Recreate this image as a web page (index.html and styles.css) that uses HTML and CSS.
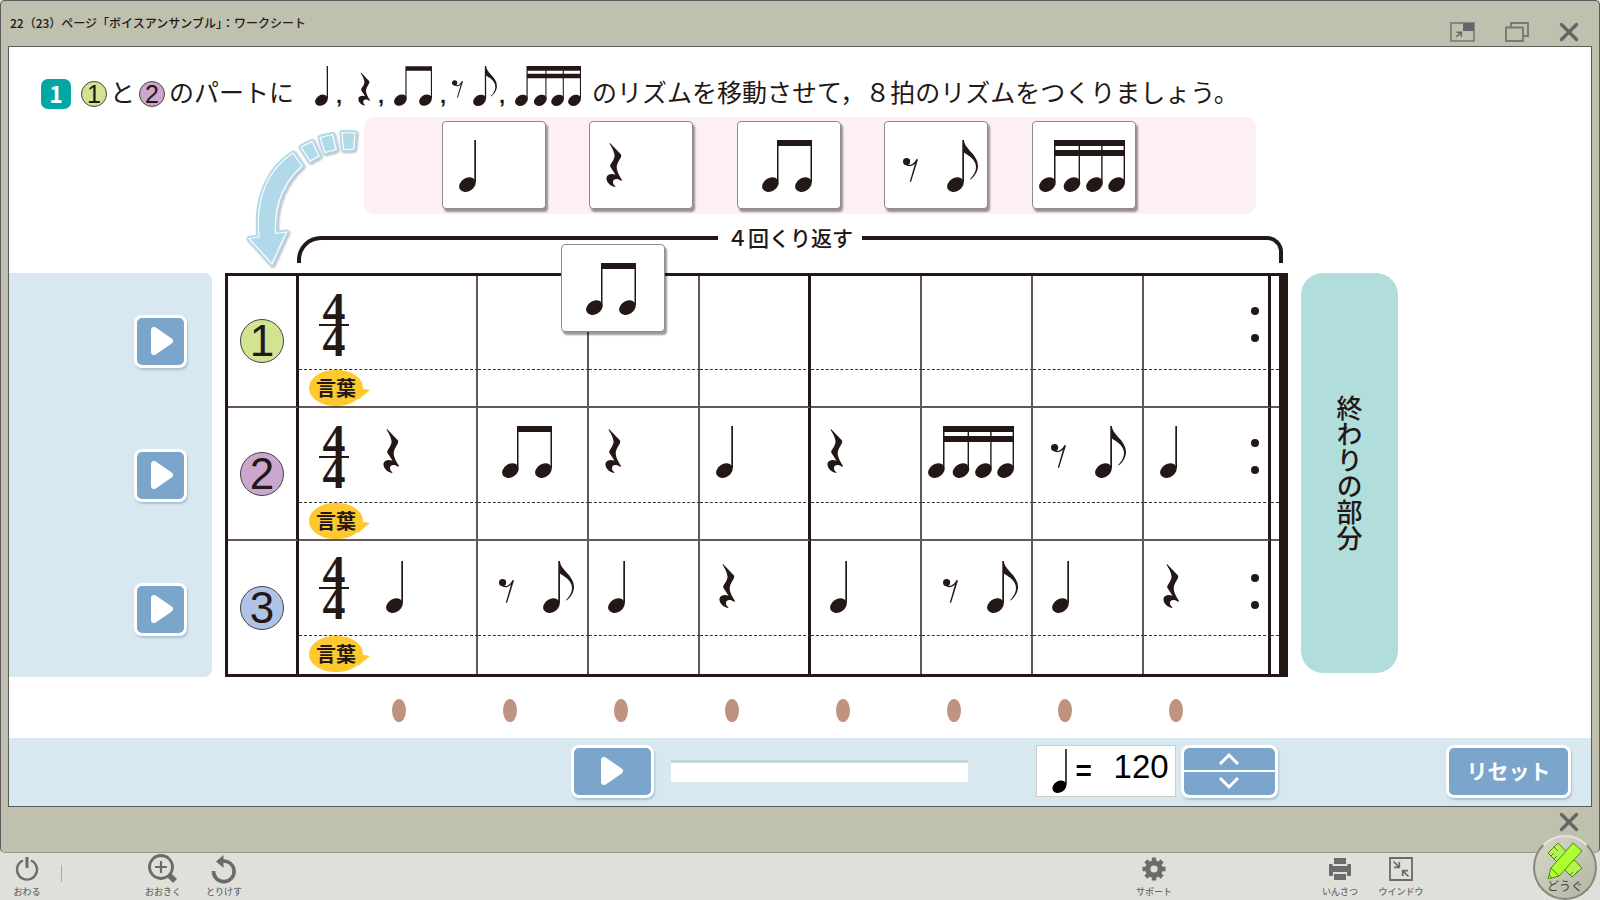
FILE: index.html
```html
<!DOCTYPE html>
<html lang="ja">
<head>
  <meta charset="UTF-8" />
  <meta name="viewport" content="width=device-width, initial-scale=1.0"/>
  <title>ボイスアンサンブル：ワークシート</title>
  <link rel="stylesheet" href="styles.css">
</head>
<body>
  <!-- note shapes -->
  <svg class="defs" aria-hidden="true">
    <symbol id="quarter" viewBox="0 0 17 52">
      <ellipse cx="8.4" cy="44.6" rx="8.8" ry="6.7" transform="rotate(-32 8.4 44.6)"/>
      <path d="M15.3 0H17V42H15.3Z"/>
    </symbol>
    <symbol id="rest" viewBox="0 0 16 44">
      <path d="M4 0L15 11.5C16.5 14.5 10.5 19 10.7 25C11 29 13.5 33 16 37L15.3 38C11 34.8 7 36 7 39C7 41 8 42.5 9.5 43.3L9 44C4 43 0 39 .5 34.5C1 31 6 30 9.5 31.7L4.2 23.5C3.4 21 9 17 8.5 12C8 8 5.5 4 3.6.8Z"/>
    </symbol>
    <symbol id="pair" viewBox="0 0 50 52">
      <ellipse cx="8.4" cy="44.6" rx="8.8" ry="6.7" transform="rotate(-32 8.4 44.6)"/>
      <ellipse cx="41.4" cy="44.6" rx="8.8" ry="6.7" transform="rotate(-32 41.4 44.6)"/>
      <path d="M15 0H50V42H48.5V6H16.5V42H15Z"/>
    </symbol>
    <symbol id="eighth-rest" viewBox="0 0 15 24">
      <circle cx="3.6" cy="3.6" r="3.6"/>
      <path d="M3 6C7 8.5 11 6 13.5 1L15 1.5L8 24L6.8 23.5L12 5.5C9 8.6 6 9 3 7Z"/>
    </symbol>
    <symbol id="eighth" viewBox="0 0 31 52">
      <ellipse cx="8.4" cy="44.6" rx="8.8" ry="6.7" transform="rotate(-32 8.4 44.6)"/>
      <path d="M15.3 0H17C17 9 31 14 31 26C31 32 27 37 23.5 39.5L23 39C28 34 30 29 28.5 24C26 17 20 15 17 12.5V42H15.3Z"/>
    </symbol>
    <symbol id="sixteenths" viewBox="0 0 86 52">
      <ellipse cx="8.4" cy="44.6" rx="8.8" ry="6.7" transform="rotate(-32 8.4 44.6)"/>
      <ellipse cx="33" cy="44.6" rx="8.8" ry="6.7" transform="rotate(-32 33 44.6)"/>
      <ellipse cx="55.5" cy="44.6" rx="8.8" ry="6.7" transform="rotate(-32 55.5 44.6)"/>
      <ellipse cx="77.6" cy="44.6" rx="8.8" ry="6.7" transform="rotate(-32 77.6 44.6)"/>
      <path d="M15 0H86V42H84.6V16H63.6V42H62.2V16H41V42H39.6V16H16.5V42H15ZM16.5 6V10H39.6V6ZM41 6V10H62.2V6ZM63.6 6V10H84.6V6Z" fill-rule="evenodd"/>
    </symbol>
    <symbol id="play" viewBox="0 0 22 28">
      <path d="M3 3V25L19 14Z" fill="#fff" stroke="#fff" stroke-width="6" stroke-linejoin="round"/>
    </symbol>
    <symbol id="cross" viewBox="0 0 20 20">
      <path d="M2.5 2.5L17.5 17.5M17.5 2.5L2.5 17.5" fill="none" stroke="#666" stroke-width="3.4" stroke-linecap="round"/>
    </symbol>
  </svg>

  <div class="window">
    <header class="titlebar">
      <span class="title">22（23）ページ「ボイスアンサンブル」：ワークシート</span>
      <div class="window-buttons">
        <button type="button" aria-label="小さく表示">
          <svg width="25" height="20" viewBox="0 0 25 20"><rect x="1" y="1" width="23" height="18" fill="none" stroke="#777" stroke-width="1.6"/><path d="M13 1H24V9H13Z" fill="#666"/><path d="M6 15L11 10.5M6.5 10.3H11.3V14.8" fill="none" stroke="#666" stroke-width="1.6"/></svg>
        </button>
        <button type="button" aria-label="元のサイズ">
          <svg width="24" height="20" viewBox="0 0 24 20"><path d="M1 5.5H18V19H1ZM6 5V1H23V14H18.5" fill="none" stroke="#777" stroke-width="1.8"/></svg>
        </button>
        <button type="button" aria-label="閉じる">
          <svg width="20" height="20"><use href="#cross"/></svg>
        </button>
      </div>
    </header>

    <main class="sheet">
      <h1 class="question">
        <span class="badge">1</span>
        <span class="circle green">1</span>
        <span>と</span>
        <span class="circle purple">2</span>
        <span>のパートに</span>
        <span class="question-notes">
          <svg class="note quarter"><use href="#quarter"/></svg><span class="comma">,</span>
          <svg class="note rest"><use href="#rest"/></svg><span class="comma">,</span>
          <svg class="note pair"><use href="#pair"/></svg><span class="comma">,</span>
          <svg class="note eighth-rest"><use href="#eighth-rest"/></svg>
          <svg class="note eighth"><use href="#eighth"/></svg><span class="comma">,</span>
          <svg class="note sixteenths"><use href="#sixteenths"/></svg>
        </span>
        <span>のリズムを移動させて，８拍のリズムをつくりましょう。</span>
      </h1>

      <div class="stage">
        <div class="tray-row">
          <svg class="arrow" viewBox="244 126 118 146" aria-hidden="true">
            <defs>
              <path id="arrow-shape" d="M293 153C268 169 255 198 259 237L249 238.5L272 264L286.5 232L275.5 233.5C274 205 284 182 302 166ZM301 147L312 141.5L319 156L310 161ZM320 137.5L332.5 134.5L336 149.5L325 152.5ZM342 132.5L355 133L353.5 149L343.5 149.5Z" stroke-linejoin="round" fill="#b1d9ea"/>
            </defs>
            <use href="#arrow-shape" stroke="#b1d9ea" stroke-width="5"/>
            <use href="#arrow-shape" stroke="#fff" stroke-width="1.2"/>
          </svg>
          <div class="tray">
            <button type="button" class="card" aria-label="四分音符"><svg class="note quarter"><use href="#quarter"/></svg></button>
            <button type="button" class="card" aria-label="四分休符"><svg class="note rest"><use href="#rest"/></svg></button>
            <button type="button" class="card" aria-label="八分音符二つ"><svg class="note pair"><use href="#pair"/></svg></button>
            <button type="button" class="card" aria-label="八分休符と八分音符"><svg class="note eighth-rest"><use href="#eighth-rest"/></svg><svg class="note eighth"><use href="#eighth"/></svg></button>
            <button type="button" class="card" aria-label="十六分音符四つ"><svg class="note sixteenths"><use href="#sixteenths"/></svg></button>
          </div>
        </div>

        <div class="repeat-bracket">
          <span class="arm arm-left"></span>
          <span class="repeat-text">４回くり返す</span>
          <span class="arm arm-right"></span>
        </div>

        <div class="part-buttons">
          <button type="button" class="blue-button part-play" aria-label="パート1を再生"><svg width="22" height="28"><use href="#play"/></svg></button>
          <button type="button" class="blue-button part-play" aria-label="パート2を再生"><svg width="22" height="28"><use href="#play"/></svg></button>
          <button type="button" class="blue-button part-play" aria-label="パート3を再生"><svg width="22" height="28"><use href="#play"/></svg></button>
        </div>

        <div class="score">
          <table>
            <colgroup>
              <col class="col-number"><col class="col-first"><col class="col-beat"><col class="col-beat"><col class="col-beat"><col class="col-beat"><col class="col-beat"><col class="col-beat"><col class="col-last"><col class="col-end">
            </colgroup>
            <tbody class="part-1">
              <tr class="rhythm">
                <th rowspan="2"><span class="circle big green">1</span></th>
                <td><div class="beat"><span class="time-sig">4<br>4</span></div></td>
                <td></td><td></td><td></td><td></td><td></td><td></td>
                <td><div class="beat"><span class="repeat-dots"><i></i><i></i></span></div></td>
                <td></td>
              </tr>
              <tr class="words">
                <td><span class="word-label">言葉</span></td>
                <td></td><td></td><td></td><td></td><td></td><td></td><td></td><td></td>
              </tr>
            </tbody>
            <tbody class="part-2">
              <tr class="rhythm">
                <th rowspan="2"><span class="circle big purple">2</span></th>
                <td><div class="beat"><span class="time-sig">4<br>4</span><svg class="note rest"><use href="#rest"/></svg></div></td>
                <td><div class="beat"><svg class="note pair"><use href="#pair"/></svg></div></td>
                <td><div class="beat"><svg class="note rest"><use href="#rest"/></svg></div></td>
                <td><div class="beat"><svg class="note quarter"><use href="#quarter"/></svg></div></td>
                <td><div class="beat"><svg class="note rest"><use href="#rest"/></svg></div></td>
                <td><div class="beat"><svg class="note sixteenths"><use href="#sixteenths"/></svg></div></td>
                <td><div class="beat"><svg class="note eighth-rest"><use href="#eighth-rest"/></svg><svg class="note eighth"><use href="#eighth"/></svg></div></td>
                <td><div class="beat"><svg class="note quarter"><use href="#quarter"/></svg><span class="repeat-dots"><i></i><i></i></span></div></td>
                <td></td>
              </tr>
              <tr class="words">
                <td><span class="word-label">言葉</span></td>
                <td></td><td></td><td></td><td></td><td></td><td></td><td></td><td></td>
              </tr>
            </tbody>
            <tbody class="part-3">
              <tr class="rhythm">
                <th rowspan="2"><span class="circle big blue">3</span></th>
                <td><div class="beat"><span class="time-sig">4<br>4</span><svg class="note quarter"><use href="#quarter"/></svg></div></td>
                <td><div class="beat"><svg class="note eighth-rest"><use href="#eighth-rest"/></svg><svg class="note eighth"><use href="#eighth"/></svg></div></td>
                <td><div class="beat"><svg class="note quarter"><use href="#quarter"/></svg></div></td>
                <td><div class="beat"><svg class="note rest"><use href="#rest"/></svg></div></td>
                <td><div class="beat"><svg class="note quarter"><use href="#quarter"/></svg></div></td>
                <td><div class="beat"><svg class="note eighth-rest"><use href="#eighth-rest"/></svg><svg class="note eighth"><use href="#eighth"/></svg></div></td>
                <td><div class="beat"><svg class="note quarter"><use href="#quarter"/></svg></div></td>
                <td><div class="beat"><svg class="note rest"><use href="#rest"/></svg><span class="repeat-dots"><i></i><i></i></span></div></td>
                <td></td>
              </tr>
              <tr class="words">
                <td><span class="word-label">言葉</span></td>
                <td></td><td></td><td></td><td></td><td></td><td></td><td></td><td></td>
              </tr>
            </tbody>
          </table>
          <button type="button" class="card dragging" aria-label="移動中の八分音符"><svg class="note pair"><use href="#pair"/></svg></button>
        </div>

        <button type="button" class="ending">終わりの部分</button>

        <div class="beat-marks">
          <i></i><i></i><i></i><i></i><i></i><i></i><i></i><i></i>
        </div>
      </div>

      <div class="controls">
        <button type="button" class="blue-button main-play" aria-label="再生"><svg width="22" height="28"><use href="#play"/></svg></button>
        <progress value="0" max="100" aria-label="再生位置"></progress>
        <label class="tempo">
          <svg class="tempo-note"><use href="#quarter"/></svg>
          <span class="equals">=</span>
          <input type="text" value="120" aria-label="テンポ">
        </label>
        <div class="stepper">
          <button type="button" aria-label="速く"><svg width="22" height="14" viewBox="0 0 22 14"><path d="M2 12L11 3L20 12"/></svg></button>
          <button type="button" aria-label="遅く"><svg width="22" height="14" viewBox="0 0 22 14"><path d="M2 2L11 11L20 2"/></svg></button>
        </div>
        <button type="reset" class="blue-button reset">リセット</button>
      </div>
    </main>

    <div class="window-foot">
      <button type="button" aria-label="閉じる"><svg width="20" height="20"><use href="#cross"/></svg></button>
    </div>
  </div>

  <nav class="toolbar">
    <button type="button" class="tool">
      <svg width="24" height="26" viewBox="0 0 24 26"><path d="M8 4.5A10 10 0 1 0 16 4.5" fill="none" stroke="#6b6b6b" stroke-width="2.4"/><path d="M12 1V12" stroke="#6b6b6b" stroke-width="3"/></svg>
      <span>おわる</span>
    </button>
    <span class="divider"></span>
    <button type="button" class="tool zoom-tool">
      <svg width="30" height="30" viewBox="0 0 30 30"><circle cx="13" cy="13" r="11.5" fill="none" stroke="#6b6b6b" stroke-width="2.8"/><path d="M13 7V19M7 13H19" stroke="#6b6b6b" stroke-width="2.2"/><path d="M21 21L27 27" stroke="#6b6b6b" stroke-width="5.5"/></svg>
      <span>おおきく</span>
    </button>
    <button type="button" class="tool">
      <svg width="26" height="30" viewBox="0 0 26 30"><path d="M2.5 17A10.3 10.3 0 1 0 10.5 7.3" fill="none" stroke="#6b6b6b" stroke-width="3.6"/><path d="M5 7.5L12.5 1V14Z" fill="#6b6b6b"/></svg>
      <span>とりけす</span>
    </button>
    <button type="button" class="tool support-tool">
      <svg width="24" height="24" viewBox="0 0 24 24"><circle cx="12" cy="12" r="6.2" fill="none" stroke="#6b6b6b" stroke-width="5.2"/><path d="M12 .5V5M12 19V23.5M.5 12H5M19 12H23.5M3.9 3.9L7 7M17 17L20.1 20.1M20.1 3.9L17 7M7 17L3.9 20.1" stroke="#6b6b6b" stroke-width="4.4"/></svg>
      <span>サポート</span>
    </button>
    <button type="button" class="tool print-tool">
      <svg width="24" height="24" viewBox="0 0 24 24" fill="#6b6b6b"><path d="M6 1H18V7H6Z"/><path d="M1 7H4.5V9H19.5V7H23V19H19V15H5V19H1Z"/><path d="M6 17H18V23H6Z"/></svg>
      <span>いんさつ</span>
    </button>
    <button type="button" class="tool">
      <svg width="24" height="24" viewBox="0 0 24 24" fill="none" stroke="#6b6b6b" stroke-width="1.8"><path d="M1 1H23V23H1Z"/><path d="M4.5 4.5L10 10M10.3 5V10.3H5M19.5 19.5L14 14M13.7 19V13.7H19" stroke-width="1.7"/></svg>
      <span>ウインドウ</span>
    </button>
    <button type="button" class="pen-tool">
      <svg width="36" height="38" viewBox="0 0 36 38" stroke="#4c8a1c" stroke-width="1" stroke-linejoin="round"><path d="M1 12L11 2L35 27L25 36Z" fill="#b5f34e"/><path d="M4 15L7 12M7 18L10 15M7 6L11 10M23 34L26 31M28 33L31 30M27 19L24 22" fill="none"/><path d="M26 2L35 10L12 35L1 38L4 27Z" fill="#adff2f"/><path d="M4 27L12 35M2 34L5 37" fill="none"/></svg>
      <span>どうぐ</span>
    </button>
  </nav>
</body>
</html>
```
FILE: styles.css
```css
* {
  box-sizing: border-box;
}

body {
  margin: 0;
  min-height: 100vh;
  display: flex;
  flex-direction: column;
  background: #dfe0da;
  color: #231815;
  font-family: "Noto Sans CJK JP", "Liberation Sans", sans-serif;
}

button {
  margin: 0;
  padding: 0;
  border: none;
  background: none;
  color: inherit;
  font-family: inherit;
  cursor: pointer;
}

svg {
  display: block;
  flex: none;
}

.defs {
  position: absolute;
  width: 0;
  height: 0;
}

/* window frame */
.window {
  flex: 1;
  display: flex;
  flex-direction: column;
  padding: 0 7px;
  background: #c0c0ae;
  border: 1px solid #5c5c5c;
  border-bottom-color: #97978a;
  border-radius: 5px;
}

.titlebar {
  display: flex;
  justify-content: space-between;
  height: 45px;
  padding: 0 13px 0 2px;
}

.title {
  font-size: 12px;
  font-weight: 500;
  line-height: 44px;
}

.window-buttons {
  display: flex;
  align-items: flex-end;
  gap: 30px;
  padding-bottom: 4px;
}

.sheet {
  flex: 1;
  display: flex;
  flex-direction: column;
  background: #fff;
  border: 1px solid #5c5c5c;
}

.window-foot {
  display: flex;
  justify-content: flex-end;
  height: 45px;
  padding: 5px 13px 0 0;
  align-items: flex-start;
}

/* question line */
.question {
  display: flex;
  align-items: flex-end;
  height: 70px;
  margin: 0;
  padding: 0 0 7px 32px;
  font-size: 25px;
  font-weight: 400;
  line-height: 37px;
  white-space: nowrap;
}

.badge {
  width: 30px;
  height: 30px;
  margin: 0 10px 1px 0;
  border-radius: 7px;
  background: #00a7a5;
  color: #fff;
  font-size: 23px;
  font-weight: 700;
  line-height: 29px;
  text-align: center;
}

.circle {
  display: block;
  width: 26px;
  height: 26px;
  margin: 0 4px 3px 0;
  border: 1px solid #444;
  border-radius: 50%;
  font-family: "Liberation Sans", sans-serif;
  font-size: 25px;
  font-weight: 400;
  line-height: 24px;
  text-align: center;
}

.question .green {
  margin-right: 3px;
}

.question .purple {
  margin-left: 4px;
}

.green { background: #d2e392; }
.purple { background: #cba6cd; }
.blue { background: #afc3e6; }

.question-notes {
  display: flex;
  align-items: flex-end;
  gap: 8px;
  height: 40px;
  margin: 0 11px 4px 21px;
}

.comma {
  width: 8px;
  font-family: "Liberation Sans", sans-serif;
  font-weight: 700;
  font-size: 22px;
  line-height: 20px;
}

.question-notes .quarter { width: 13px; height: 40px; }
.question-notes .rest { width: 12px; height: 34px; margin-left: 6px; }
.question-notes .pair { width: 38px; height: 40px; }
.question-notes .eighth-rest { width: 11px; height: 18px; margin: 0 2px 8px -4px; }
.question-notes .eighth { width: 24px; height: 40px; margin-right: -6px; }
.question-notes .sixteenths { width: 66px; height: 40px; }

/* notes */
.note {
  fill: #231815;
  overflow: visible;
}

.card .quarter, .beat .quarter { width: 17px; height: 52px; margin-left: 16px; }
.card .rest, .beat .rest { width: 16px; height: 44px; margin: 3px 0 0 16px; }
.card .pair, .beat .pair { width: 50px; height: 52px; margin-left: 24px; }
.card .eighth-rest, .beat .eighth-rest { width: 15px; height: 24px; margin: 18px 0 0 18px; }
.card .eighth, .beat .eighth { width: 31px; height: 52px; margin-left: 29px; }
.card .sixteenths, .beat .sixteenths { width: 86px; height: 52px; margin-left: 6px; }

.stage {
  flex: 1;
  display: grid;
  grid-template-columns: 204fr 1063fr 97fr 181fr;
  grid-template-rows: auto auto auto 1fr;
  column-gap: 13px;
}

.tray-row {
  grid-column: 2;
  position: relative;
  padding: 0 32px 0 139px;
}

.arrow {
  position: absolute;
  left: 19px;
  top: 9px;
  width: 118px;
  height: 146px;
  filter: drop-shadow(1px 1px 1px rgba(0, 0, 0, 0.3));
}

.tray {
  display: flex;
  justify-content: space-between;
  padding: 4px 120px 5px 78px;
  border-radius: 10px;
  background: #fdeff4;
}

.card {
  display: flex;
  align-items: flex-start;
  width: 104px;
  height: 88px;
  padding-top: 18px;
  background: #fff;
  border: 1px solid #8c8c8c;
  border-radius: 4px;
  box-shadow: 2px 3px 2px rgba(0, 0, 0, 0.4);
}

.repeat-bracket {
  grid-column: 2;
  display: flex;
  align-items: flex-start;
  margin: 12px 5px 10px 72px;
}

.arm {
  flex: 1;
  height: 27px;
  margin-top: 10px;
  border-top: 4px solid #231815;
}

.arm-left {
  border-left: 4px solid #231815;
  border-top-left-radius: 24px;
}

.arm-right {
  border-right: 4px solid #231815;
  border-top-right-radius: 16px;
}

.repeat-text {
  padding: 0 9px;
  font-size: 21px;
  font-weight: 500;
  line-height: 22px;
}

/* play buttons at the left */
.part-buttons {
  grid-column: 1;
  grid-row: 3;
  display: grid;
  align-items: center;
  justify-items: end;
  padding: 1px 25px 1px 0;
  background: #d8e8f0;
  border-radius: 0 8px 8px 0;
}

.blue-button {
  display: flex;
  align-items: center;
  justify-content: center;
  background: #7ba5ca;
  border: 3px solid #fff;
  border-radius: 8px;
  box-shadow: 1px 2px 2px rgba(60, 110, 130, 0.3);
  color: #fff;
}

.part-play {
  width: 53px;
  height: 53px;
  padding-left: 4px;
}

/* score */
.score {
  grid-column: 2;
  grid-row: 3;
  position: relative;
}

table {
  width: 100%;
  table-layout: fixed;
  border-collapse: separate;
  border-spacing: 0;
  border: 3px solid #231815;
  border-right-width: 9px;
}

.col-number { width: 71px; }
.col-first { width: 179px; }
.col-beat { width: 111px; }
.col-last { width: 127px; }
.col-end { width: 8px; }

th,
td {
  padding: 0;
  vertical-align: top;
  border-right: 2px solid #625956;
}

th {
  vertical-align: middle;
  border-right: 3px solid #231815;
}

.rhythm td {
  height: 95px;
  border-bottom: 1px dashed #333;
}

.words td {
  height: 38px;
}

.part-1 .rhythm td {
  height: 94px;
}

.part-1 .words td {
  height: 37px;
}

tbody:not(.part-3) th,
tbody:not(.part-3) .words td {
  border-bottom: 2px solid #625956;
}

/* thick bar lines */
.rhythm td:nth-child(5),
.words td:nth-child(4),
.rhythm td:nth-child(9),
.words td:nth-child(8) {
  border-right: 3px solid #231815;
}

.rhythm td:last-child,
.words td:last-child {
  border-right: none;
}

.beat {
  display: flex;
  align-items: flex-start;
  padding-top: 18px;
}

.part-3 .beat {
  padding: 20px 0 0 3px;
}

.time-sig {
  position: relative;
  width: 30px;
  height: 62px;
  margin: 0 18px 0 20px;
  font-family: "Liberation Serif", serif;
  font-size: 46px;
  font-weight: 700;
  line-height: 31px;
  text-align: center;
}

.time-sig::after {
  content: "";
  position: absolute;
  left: 0;
  right: 0;
  top: 30px;
  height: 2px;
  background: #231815;
}

.part-3 .time-sig {
  margin: -4px 21px 0 17px;
}

.repeat-dots {
  display: flex;
  flex-direction: column;
  gap: 19px;
  margin: 13px 9px 0 auto;
}

.repeat-dots i {
  width: 8px;
  height: 8px;
  border-radius: 50%;
  background: #231815;
}

.big {
  width: 44px;
  height: 44px;
  margin: 0 auto;
  font-size: 44px;
  line-height: 42px;
}

.word-label {
  position: relative;
  display: block;
  width: 54px;
  height: 36px;
  margin-left: 10px;
  border-radius: 50% / 52%;
  background: #fdc92f;
  font-size: 20px;
  font-weight: 700;
  line-height: 35px;
  text-align: center;
}

.word-label::after {
  content: "";
  position: absolute;
  left: 49px;
  top: 18px;
  border-top: 2px solid transparent;
  border-left: 12px solid #fdc92f;
  border-bottom: 10px solid transparent;
}

.dragging {
  position: absolute;
  left: 31.6%;
  top: -29px;
}

.ending {
  grid-column: 3;
  grid-row: 3;
  margin-bottom: 4px;
  border-radius: 22px;
  background: #b1dedc;
  font-size: 26px;
  font-weight: 500;
  writing-mode: vertical-rl;
  text-align: center;
  line-height: 97px;
}

.beat-marks {
  grid-column: 2;
  grid-row: 4;
  display: grid;
  grid-template-columns: 119fr repeat(8, 111fr) 56fr;
  justify-items: center;
  padding: 22px 0 16px;
}

.beat-marks i {
  width: 14px;
  height: 23px;
  border-radius: 50%;
  background: #c09380;
}

.beat-marks i:first-child {
  grid-column: 2;
}

/* bottom controls */
.controls {
  display: flex;
  align-items: center;
  height: 68px;
  padding: 0 20px 2px 35.5%;
  background: #d8e8f0;
}

.main-play {
  width: 83px;
  height: 53px;
}

progress {
  appearance: none;
  width: 297px;
  height: 22px;
  margin: 0 68px 0 17px;
  border: none;
  border-top: 3px solid #c3d7da;
  background: #fff;
}

progress::-webkit-progress-bar {
  background: #fff;
}

.tempo {
  display: flex;
  align-items: center;
  width: 140px;
  height: 52px;
  padding: 0 6px 0 15px;
  background: #fff;
  border: 1px solid #ccc;
  color: #000;
  font-family: "Liberation Sans", sans-serif;
}

.tempo-note {
  width: 15px;
  height: 44px;
}

.equals {
  margin-left: 9px;
  font-size: 28px;
  font-weight: 700;
  line-height: 40px;
}

.tempo input {
  flex: 1;
  min-width: 0;
  height: 40px;
  margin-bottom: 8px;
  padding: 0;
  border: none;
  background: none;
  color: #000;
  font-family: inherit;
  font-size: 33px;
  text-align: right;
}

.stepper {
  display: flex;
  flex-direction: column;
  gap: 2px;
  width: 97px;
  height: 53px;
  margin-left: 5px;
  overflow: hidden;
  background: #fff;
  border: 3px solid #fff;
  border-radius: 8px;
  box-shadow: 1px 2px 2px rgba(60, 110, 130, 0.3);
}

.stepper button {
  flex: 1;
  display: flex;
  align-items: center;
  justify-content: center;
  background: #7ba5ca;
}

.stepper button:first-child { border-radius: 5px 5px 0 0; }
.stepper button:last-child { border-radius: 0 0 5px 5px; }

.stepper path {
  fill: none;
  stroke: #fff;
  stroke-width: 3;
}

.reset {
  width: 125px;
  height: 53px;
  margin-left: auto;
  padding-bottom: 2px;
  font-size: 21px;
  font-weight: 700;
}

/* toolbar */
.toolbar {
  position: relative;
  display: flex;
  height: 47px;
  padding: 0 175px 0 3px;
}

.tool {
  display: flex;
  flex-direction: column;
  align-items: center;
  justify-content: flex-end;
  width: 48px;
  margin-right: 13px;
  padding-bottom: 2px;
  color: #6b6b6b;
  font-size: 9px;
  line-height: 13px;
  white-space: nowrap;
}

.tool span {
  font-weight: 500;
}

.tool svg {
  margin: auto 0;
}

.divider {
  width: 1px;
  height: 17px;
  margin: 12px 0 0 -3px;
  background: #aaa;
}

.zoom-tool {
  margin-left: 77px;
}

.support-tool {
  margin-left: auto;
}

.print-tool {
  margin-left: 125px;
}

.tool:nth-last-child(2) {
  margin-right: 0;
}

.pen-tool {
  position: absolute;
  right: 3px;
  bottom: 0;
  display: flex;
  flex-direction: column;
  align-items: center;
  width: 64px;
  height: 65px;
  padding-top: 4px;
  border: 2px solid #87877b;
  border-top-color: #e4e4da;
  border-radius: 50%;
  background: linear-gradient(135deg, #d8d8ca, #b4b4a2);
  color: #444;
  font-size: 12px;
  line-height: 14px;
}
```
